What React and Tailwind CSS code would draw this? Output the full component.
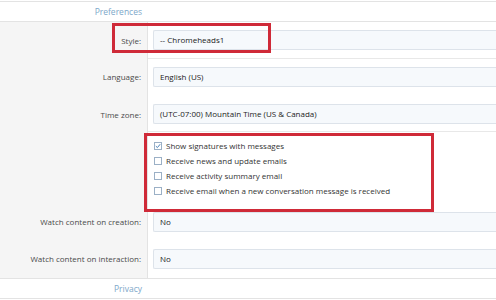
const labelCol = 'w-[148px] shrink-0 pr-[6px] text-right'

function Field({ label, value, pt = 'pt-[8px]', pb = 'pb-[8px]', border = '' }) {
  return (
    <div className="flex">
      <div className={`${labelCol} ${pt} ${pb} flex items-center justify-end bg-[#f5f5f5] border-r border-[#e3e3e3] text-[#4a4a4a]`}>
        <span className="leading-[20px]">{label}</span>
      </div>
      <div className={`flex-1 pl-[5px] ${pt} ${pb} ${border}`}>
        <div className="h-[20px] flex items-center pl-[6px] bg-[#f6f9fc] border border-r-0 border-[#dde3ea] rounded-l-[2px] text-[#222]">
          {value}
        </div>
      </div>
    </div>
  )
}

function Check({ checked, children }) {
  return (
    <div className="flex items-center h-[15px]">
      <span className="w-[8px] h-[8px] border border-[#9bb0c6] bg-white flex items-center justify-center mr-[4px]">
        {checked && (
          <svg width="6" height="6" viewBox="0 0 6 6">
            <path d="M0.8 3.1 L2.4 4.6 L5.2 1.2" fill="none" stroke="#4a82b8" strokeWidth="1" />
          </svg>
        )}
      </span>
      <span className="text-[#333]">{children}</span>
    </div>
  )
}

export default function App() {
  return (
    <div
      className="relative w-[496px] h-[300px] bg-white overflow-hidden text-[8px]"
      style={{ fontFamily: '"Open Sans", "Noto Sans", sans-serif' }}
    >
      <div className="pt-[1px]">
        {/* Section header */}
        <div className="flex h-[21px] border-y border-[#e3e3e3] bg-white">
          <div className={`${labelCol} pt-[1px] flex items-center justify-end text-[8.5px] text-[#7da7c9]`}>
            Preferences
          </div>
        </div>

        {/* Body */}
        <div className="flex flex-col">
          <Field label="Style:" value="-- Chromeheads1" pt="pt-[8px]" pb="pb-[8px]" border="border-b border-[#e8e8e8]" />
          <Field label="Language:" value="English (US)" pt="pt-[8px]" pb="pb-[8px]" />
          <Field label="Time zone:" value="(UTC-07:00) Mountain Time (US & Canada)" pt="pt-[9px]" pb="pb-[7px]" border="border-b border-[#e8e8e8]" />

          <div className="flex">
            <div className={`${labelCol} bg-[#f5f5f5] border-r border-[#e3e3e3]`} />
            <div className="flex-1 pl-[6px] pt-[6px] pb-[6px]">
              <Check checked>Show signatures with messages</Check>
              <Check>Receive news and update emails</Check>
              <Check>Receive activity summary email</Check>
              <Check>Receive email when a new conversation message is received</Check>
            </div>
          </div>

          <Field label="Watch content on creation:" value="No" pt="pt-[8px]" pb="pb-[8px]" />
          <Field label="Watch content on interaction:" value="No" pt="pt-[9px]" pb="pb-[9px]" />
        </div>

        {/* Next section */}
        <div className="flex h-[21px] border-y border-[#e3e3e3] bg-white">
          <div className={`${labelCol} pt-[1px] flex items-center justify-end text-[8.5px] text-[#7da7c9]`}>
            Privacy
          </div>
        </div>
      </div>

      {/* Annotation boxes */}
      <div className="absolute left-[112px] top-[23px] w-[159px] h-[30px] border-[3px] border-[#cf2a38]" />
      <div className="absolute left-[144px] top-[133px] w-[290px] h-[79px] border-[3px] border-[#cf2a38]" />
    </div>
  )
}
